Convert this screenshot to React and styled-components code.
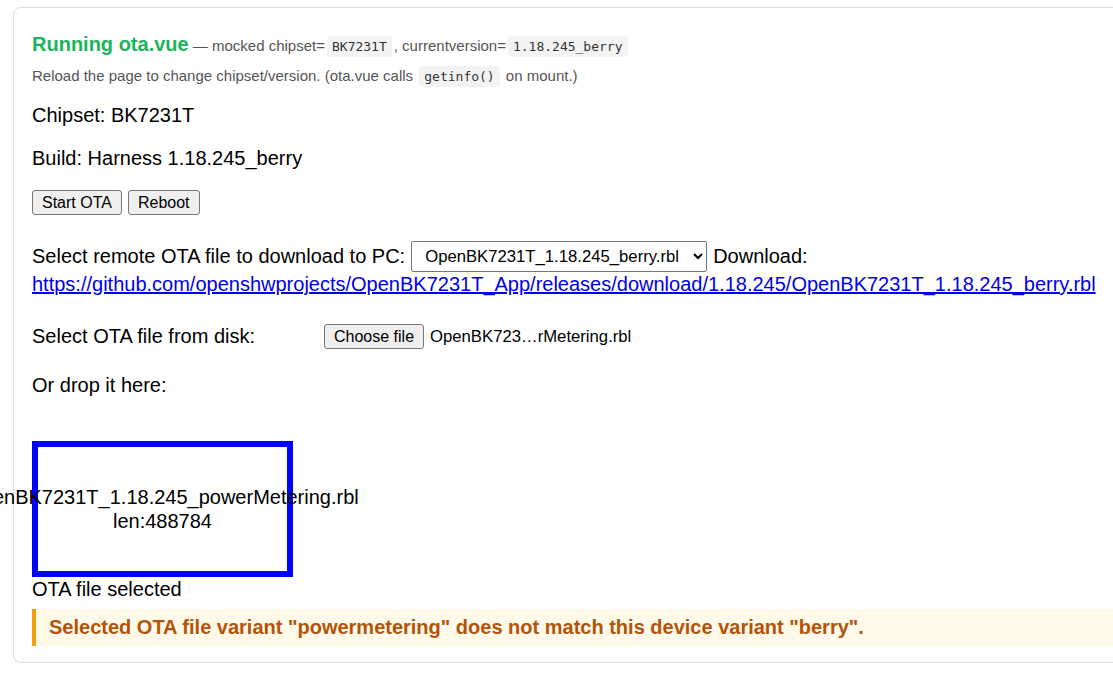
import React from "react";
import styled, { createGlobalStyle } from "styled-components";

const Global = createGlobalStyle`
  html, body { margin: 0; padding: 0; background: #fff; overflow: hidden; }
  body { font-family: "Liberation Sans", Arial, sans-serif; color: #000; }
  #root { padding: 7px 0 0 13px; }
`;

const Card = styled.div`
  width: 1130px;
  border: 1px solid #dcdcdc;
  border-radius: 8px;
  padding: 18px 18px 16px 18px;
  box-sizing: border-box;
`;

const Title = styled.div`
  margin-top: 6px;
  height: 24px;
  line-height: 24px;
  font-size: 15px;
  color: #555;
  white-space: nowrap;
`;

const Green = styled.span`
  font-size: 20px;
  font-weight: 700;
  color: #1bb35c;
`;

const Note = styled.div`
  margin-top: 8px;
  height: 24px;
  line-height: 24px;
  font-size: 15px;
  color: #555;
  white-space: nowrap;
`;

const Code = styled.code`
  font-family: "DejaVu Sans Mono", "Liberation Mono", monospace;
  font-size: 13px;
  color: #333;
  background: #f3f3f3;
  padding: 3px 5px;
  border-radius: 4px;
  margin: 0 2px;
`;

const Para = styled.p`
  margin: ${(p) => p.$mt}px 0 0 0;
  font-size: 20px;
  height: ${(p) => p.$lh || 22}px;
  line-height: ${(p) => p.$lh || 22}px;
  white-space: nowrap;
`;

const ButtonRow = styled.div`
  margin-top: 21px;
  display: flex;
  gap: 6px;
`;

const Btn = styled.button`
  font-family: "Liberation Sans", Arial, sans-serif;
  font-size: 16px;
  height: 25px;
  padding: 0 9px;
  background: #efefef;
  border: 1px solid #767676;
  border-radius: 3px;
  color: #000;
  line-height: 1;
`;

const SelectRow = styled.div`
  margin-top: 26px;
  display: flex;
  align-items: center;
  height: 30px;
  font-size: 20px;
  white-space: nowrap;
`;

const Select = styled.select`
  font-family: "Liberation Sans", Arial, sans-serif;
  font-size: 16.7px;
  width: 296px;
  height: 31px;
  padding: 0 4px 0 9px;
  margin: 0 6px 0 6px;
  border: 1px solid #767676;
  border-radius: 2px;
  background: #fff;
  color: #000;
`;

const Link = styled.a`
  display: block;
  margin-top: 2px;
  font-size: 20px;
  line-height: 22px;
  color: #0000ee;
  text-decoration: underline;
  white-space: nowrap;
`;

const FileRow = styled.div`
  margin-top: 29px;
  display: flex;
  align-items: center;
  height: 25px;
  font-size: 20px;
`;

const FileLabel = styled.span`
  width: 292px;
`;

const FileName = styled.span`
  font-size: 16.7px;
  margin-left: 6px;
`;

const DropZone = styled.div`
  margin-top: 45px;
  width: 249px;
  height: 124px;
  border: 6px solid #0000ff;
  display: flex;
  flex-direction: column;
  align-items: center;
  justify-content: center;
  font-size: 20px;
  line-height: 24px;
  white-space: nowrap;
`;

const Warning = styled.div`
  margin-top: 8px;
  background: #fef9e8;
  border-left: 4px solid #f59e0b;
  padding: 8px 13px;
  font-size: 20px;
  line-height: 21px;
  font-weight: 700;
  color: #b45309;
  white-space: nowrap;
`;

export default function App() {
  return (
    <>
      <Global />
      <Card>
        <Title>
          <Green>Running ota.vue</Green> — mocked chipset=<Code>BK7231T</Code>, currentversion=
          <Code>1.18.245_berry</Code>
        </Title>
        <Note>
          Reload the page to change chipset/version. (ota.vue calls <Code>getinfo()</Code> on mount.)
        </Note>
        <Para $mt={16}>Chipset: BK7231T</Para>
        <Para $mt={21}>Build: Harness 1.18.245_berry</Para>
        <ButtonRow>
          <Btn>Start OTA</Btn>
          <Btn>Reboot</Btn>
        </ButtonRow>
        <SelectRow>
          Select remote OTA file to download to PC:
          <Select defaultValue="a">
            <option value="a">OpenBK7231T_1.18.245_berry.rbl</option>
          </Select>
          Download:
        </SelectRow>
        <Link href="#">
          https://github.com/openshwprojects/OpenBK7231T_App/releases/download/1.18.245/OpenBK7231T_1.18.245_berry.rbl
        </Link>
        <FileRow>
          <FileLabel>Select OTA file from disk:</FileLabel>
          <Btn>Choose file</Btn>
          <FileName>OpenBK723…rMetering.rbl</FileName>
        </FileRow>
        <Para $mt={25}>Or drop it here:</Para>
        <DropZone>
          <div>OpenBK7231T_1.18.245_powerMetering.rbl</div>
          <div>len:488784</div>
        </DropZone>
        <Para $mt={0} $lh={24}>OTA file selected</Para>
        <Warning>
          Selected OTA file variant "powermetering" does not match this device variant "berry".
        </Warning>
      </Card>
    </>
  );
}
